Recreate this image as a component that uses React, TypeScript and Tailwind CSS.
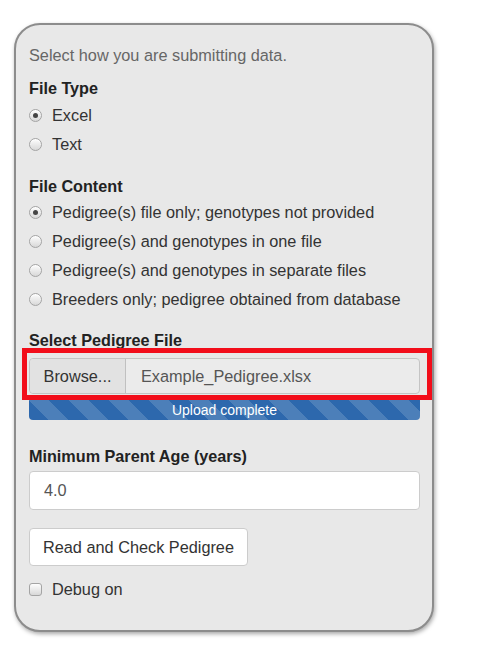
import React from "react";

function Radio({ checked, label }: { checked?: boolean; label: string }) {
  return (
    <div className="flex h-[29px] items-center">
      <span className="flex h-[13px] w-[13px] items-center justify-center rounded-full border border-[#a4a4a4] bg-[linear-gradient(#fdfdfd,#d8d8d8)] shadow-[inset_0_1px_1px_rgba(255,255,255,0.8)]">
        {checked && <span className="h-[5px] w-[5px] rounded-full bg-[#444]" />}
      </span>
      <span className="ml-[10px] text-[16.3px] text-[#333]">{label}</span>
    </div>
  );
}

function Label({ children }: { children: React.ReactNode }) {
  return <div className="flex h-[22px] items-center text-[16.2px] font-bold text-[#222]">{children}</div>;
}

export default function App() {
  return (
    <div className="min-h-[672px] w-[480px] bg-white pt-[23px] pl-[14px] font-['Liberation_Sans',Arial,sans-serif]">
      <div className="w-[420px] rounded-[26px] border-2 border-[#8c8c8c] bg-[#e8e8e8] pt-[19px] pb-[30px] pl-[13px] pr-[12px] shadow-[1px_2px_4px_rgba(0,0,0,0.35)]">
        <div className="flex h-[22px] items-center text-[16.3px] text-[#666]">Select how you are submitting data.</div>
        <div className="mt-[11px]">
          <Label>File Type</Label>
        </div>
        <div className="mt-[2px]">
          <Radio checked label="Excel" />
          <Radio label="Text" />
        </div>
        <div className="mt-[16px]">
          <Label>File Content</Label>
        </div>
        <div className="mt-[1px]">
          <Radio checked label="Pedigree(s) file only; genotypes not provided" />
          <Radio label="Pedigree(s) and genotypes in one file" />
          <Radio label="Pedigree(s) and genotypes in separate files" />
          <Radio label="Breeders only; pedigree obtained from database" />
        </div>
        <div className="mt-[15px]">
          <Label>Select Pedigree File</Label>
        </div>
        <div className="relative mt-[7px]">
          <div className="flex h-[36px] rounded-[4px] border border-[#c4c4c4] bg-[#ebebeb]">
            <div className="flex w-[96px] items-center justify-center rounded-l-[4px] border-r border-[#c0c0c0] bg-[#e2e2e2] text-[16.3px] text-[#333]">
              Browse...
            </div>
            <div className="flex flex-1 items-center pl-[15px] text-[16.3px] text-[#555]">Example_Pedigree.xlsx</div>
          </div>
          <div className="pointer-events-none absolute -top-[10px] -bottom-[6px] -left-[7px] -right-[12px] border-[5px] border-[#f20d1a]" />
        </div>
        <div className="mt-[6px] flex h-[20px] items-center justify-center rounded-b-[4px] bg-[#2d68ad] bg-[linear-gradient(45deg,rgba(255,255,255,0.15)_25%,transparent_25%,transparent_50%,rgba(255,255,255,0.15)_50%,rgba(255,255,255,0.15)_75%,transparent_75%,transparent)] bg-[length:40px_40px] text-[14px] text-white">
          Upload complete
        </div>
        <div className="mt-[25px]">
          <Label>Minimum Parent Age (years)</Label>
        </div>
        <div className="mt-[4px] flex h-[39px] items-center rounded-[4px] border border-[#cccccc] bg-white pl-[14px] text-[16.3px] text-[#555]">
          4.0
        </div>
        <div className="mt-[18px] flex h-[38px] w-[219px] items-center justify-center rounded-[4px] border border-[#cccccc] bg-white text-[16.3px] text-[#333]">
          Read and Check Pedigree
        </div>
        <div className="mt-[12px] flex h-[22px] items-center">
          <span className="h-[13px] w-[13px] rounded-[3px] border border-[#a4a4a4] bg-[linear-gradient(#fdfdfd,#d8d8d8)]" />
          <span className="ml-[10px] text-[16.3px] text-[#333]">Debug on</span>
        </div>
      </div>
    </div>
  );
}
